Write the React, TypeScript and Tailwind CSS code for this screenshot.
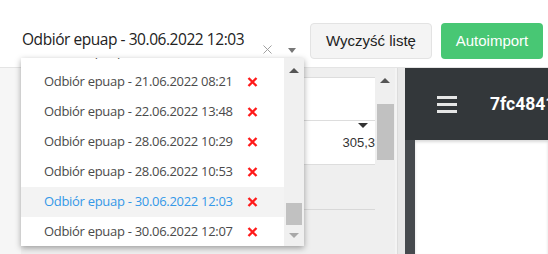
import { X } from "lucide-react";

const items = [
  { label: "Odbiór epuap - 20.06.2022 14:12", active: false },
  { label: "Odbiór epuap - 21.06.2022 08:21", active: false },
  { label: "Odbiór epuap - 22.06.2022 13:48", active: false },
  { label: "Odbiór epuap - 28.06.2022 10:29", active: false },
  { label: "Odbiór epuap - 28.06.2022 10:53", active: false },
  { label: "Odbiór epuap - 30.06.2022 12:03", active: true },
  { label: "Odbiór epuap - 30.06.2022 12:07", active: false },
];

function RemoveIcon() {
  return (
    <svg width="11" height="10" viewBox="0 0 11 10" className="shrink-0">
      <path d="M1.5 1 L9.5 9 M9.5 1 L1.5 9" stroke="#ff1a1a" strokeWidth="2.4" strokeLinecap="butt" />
    </svg>
  );
}

function UpArrow({ color }: { color: string }) {
  return <div className={`w-0 h-0 border-l-[5px] border-r-[5px] border-b-[5px] border-l-transparent border-r-transparent ${color}`} />;
}

function DownArrow({ color }: { color: string }) {
  return <div className={`w-0 h-0 border-l-[5px] border-r-[5px] border-t-[5px] border-l-transparent border-r-transparent ${color}`} />;
}

export default function App() {
  return (
    <div className="relative w-[548px] h-[254px] overflow-hidden bg-white font-['Open_Sans',sans-serif]">
      {/* Top toolbar */}
      <div className="flex h-[68px] items-start border-b border-[#e4e4e4]">
        <div className="ml-[21px] mt-[29px] flex h-[30px] w-[283px] shrink-0 items-start border-b border-[#1a9ae2]">
          <span className="pl-[1px] text-[15.5px] leading-[20px] tracking-[-0.45px] text-[#222]">
            Odbiór epuap - 30.06.2022 12:03
          </span>
          <X size={15} strokeWidth={1.5} className="ml-auto mt-[13px] text-[#9a9a9a]" />
          <div className="ml-[13px] mr-[8px] mt-[19px] w-0 h-0 border-l-[4px] border-r-[4px] border-t-[5px] border-l-transparent border-r-transparent border-t-[#777]" />
        </div>

        <button className="ml-[6px] mt-[23px] h-[36px] w-[122px] shrink-0 rounded-[4px] border border-[#e3e3e3] bg-[#f4f4f4] font-['Liberation_Sans',Arial,sans-serif] text-[15px] text-[#222]">
          Wyczyść listę
        </button>
        <button className="ml-[9px] mt-[23px] h-[36px] w-[102px] shrink-0 rounded-[4px] bg-[#48c774] font-['Liberation_Sans',Arial,sans-serif] text-[15px] text-white">
          Autoimport
        </button>
      </div>

      {/* Main area */}
      <div className="flex h-[186px]">
        {/* Left panel */}
        <div className="flex w-[405px] shrink-0 bg-[#efefef]">
          <div className="w-[21px] bg-[#f6f6f6]" />
          <div className="flex flex-1 flex-col pt-[9px]">
            <div className="flex h-[88px] flex-col border-t border-[#dddddd] bg-white">
              <div className="flex h-[43px] items-end justify-end border-b border-[#dddddd] pr-[7px]">
                <DownArrow color="border-t-[#333] mb-[-8px]" />
              </div>
              <div className="flex h-[44px] items-center justify-end border-b border-[#dddddd] font-['Liberation_Sans',Arial,sans-serif] text-[13px] text-[#333]">
                305,3
              </div>
            </div>
            <div className="mt-[44px] border-t border-[#d8d8d8]" />
          </div>
          {/* Inner scrollbar */}
          <div className="flex w-[20px] flex-col items-center pt-[10px]">
            <UpArrow color="border-b-[#555]" />
            <div className="mt-[21px] h-[56px] w-[17px] bg-[#c1c1c1]" />
          </div>
          <div className="w-[2px] bg-[#f4f4f4]" />
          <div className="w-[8px] border-l border-[#dcdcdc] bg-[#e8e8e8]" />
        </div>

        {/* Dark panel */}
        <div className="flex min-w-0 flex-1 flex-col overflow-hidden bg-[#33373a]">
          <div className="flex h-[72px] items-center">
            <div className="ml-[32px] flex w-[20px] shrink-0 flex-col gap-[4px]">
              <div className="h-[3px] bg-[#e6e6e6]" />
              <div className="h-[3px] bg-[#e6e6e6]" />
              <div className="h-[3px] bg-[#e6e6e6]" />
            </div>
            <span className="ml-[33px] whitespace-nowrap font-['Roboto',sans-serif] text-[17.5px] font-bold text-white">
              7fc4841
            </span>
          </div>
          <div className="flex flex-1">
            <div className="w-[10px] bg-[#464a4e]" />
            <div className="flex-1 bg-white shadow-[inset_0_2px_3px_rgba(0,0,0,0.15)]" />
          </div>
        </div>
      </div>

      {/* Dropdown menu */}
      <div className="absolute left-[21px] top-[58px] flex h-[188px] w-[283px] bg-white shadow-[0_2px_6px_rgba(0,0,0,0.35)]">
        <div className="flex-1 overflow-hidden">
          <div className="mt-[-21px]">
            {items.map((item) => (
              <div
                key={item.label}
                className={`flex h-[30px] items-center pl-[23px] ${item.active ? "bg-[#f3f3f3]" : ""}`}
              >
                <span
                  className={`w-[203px] whitespace-nowrap text-[13px] tracking-[-0.3px] ${item.active ? "text-[#3498e8]" : "text-[#4a4a4a]"}`}
                >
                  {item.label}
                </span>
                <RemoveIcon />
              </div>
            ))}
          </div>
        </div>
        <div className="flex w-[20px] flex-col items-center bg-[#f0f0f0] pt-[10px]">
          <UpArrow color="border-b-[#555]" />
          <div className="mt-[130px] h-[22px] w-[16px] bg-[#c1c1c1]" />
          <div className="mt-[8px]">
            <DownArrow color="border-t-[#a8a8a8]" />
          </div>
        </div>
      </div>
    </div>
  );
}
